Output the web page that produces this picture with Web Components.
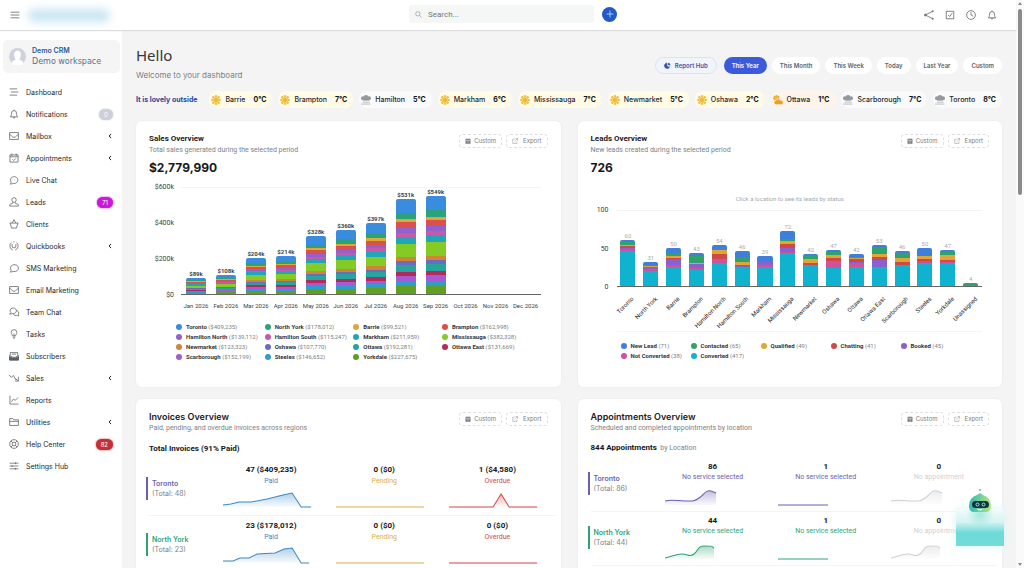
<!DOCTYPE html>
<html lang="en">
    <head>
        <meta charset="utf-8" />
        <meta name="viewport" content="width=device-width, initial-scale=1" />
        <title>Demo CRM - Dashboard</title>
        <style>
            body {
                margin: 0;
                font-family: Inter, 'Liberation Sans', sans-serif;
                font-size: 7px;
                color: #22262b;
                background: #f4f4f5;
            }
        </style>
    </head>
    <body>
        <crm-app>
            <crm-header slot="header"></crm-header>
            <crm-sidebar slot="sidebar"></crm-sidebar>
            <page-intro></page-intro>
            <weather-strip></weather-strip>
            <card-grid>
                <dash-card heading="Sales Overview" sub="Total sales generated during the selected period">
                    <sales-chart total="$2,779,990"></sales-chart>
                </dash-card>
                <dash-card heading="Leads Overview" sub="New leads created during the selected period">
                    <leads-chart total="726"></leads-chart>
                </dash-card>
                <dash-card class="wide" heading="Invoices Overview" sub="Paid, pending, and overdue invoices across regions">
                    <region-list kind="invoices"><b>Total Invoices (91% Paid)</b></region-list>
                </dash-card>
                <dash-card class="wide" heading="Appointments Overview" sub="Scheduled and completed appointments by location">
                    <region-list kind="appointments"><b>844 Appointments</b>&nbsp; by Location</region-list>
                </dash-card>
            </card-grid>
            <chat-bot slot="overlay"></chat-bot>
        </crm-app>

        <script>
            // Base class: attaches the shadow root and fills it from render()
            class CrmElement extends HTMLElement {
                connectedCallback() {
                    if (this.shadowRoot) return
                    this.attachShadow({ mode: 'open' }).innerHTML =
                        `<style>:host, * { box-sizing: border-box; } ${this.styles()}</style>` +
                        this.render()
                }

                styles() {
                    return ''
                }

                render() {
                    return '<slot></slot>'
                }
            }

            const ICONS = {
                menu: '<path d="M1 3.500h14M1 8h14M1 12.500h14"/>',
                list: '<path d="M1 3h12M3 8h12M1 13h12"/>',
                bell: '<path d="M8 1v1.500M2 12.500c1.500-1 2-2.500 2-6a4 4 0 0 1 8 0c0 3.500.5 5 2 6zM6.500 13a1.500 1.500 0 0 0 3 0"/>',
                mail: '<path d="M1 2.500h14v11H1zM1 5l5 4.500q2 1.500 4 0L15 5"/>',
                calendar: '<path d="M1.500 3h13v11.500h-13zM1.500 6h13M4.500 1v3.500M11.500 1v3.500M5.500 10l2 2 3.500-3.500"/>',
                chat: '<path d="M3.500 11.500A6 5.500 0 1 1 7 13.500q-2.500 1-5 1 1.500-1 1.500-3z"/><path d="M5 8h.5M8 8h.5M11 8h.5"/>',
                user: '<path d="M8 1a3.500 3.500 0 0 1 3.500 3.500C11.500 7 10 8.500 8 8.500S4.500 7 4.500 4.500A3.500 3.500 0 0 1 8 1zM6 8.500v1.500l-4 1.500q-1 .5-1 3h14q0-2.500-1-3L10 10V8.500"/>',
                basket: '<path d="M1 6.500h14M2 6.500l2 8h8l2-8M5 6.500L8 1l3 5.500"/>',
                books: '<path d="M6 14.500A7 7 0 0 1 4 2.500M10 14.500a7 7 0 0 0 2-12M5 5v3a3 3 0 0 0 6 0V5M7 1.500h2"/>',
                bubble: '<path d="M3.500 11.500A6.500 5.500 0 1 1 7 13.500q-2.500 1-5 1 1.500-1 1.500-3z"/>',
                bubbles: '<path d="M3 9A5 4.500 0 1 1 6 10.500q-2 1-5 .5Q3 10.500 3 9zM11.500 6A3.500 3.500 0 0 1 15 11.500q0 2 1 2.500-3 0-4-.5a5 4 0 0 1-5-1.500"/>',
                bulb: '<path d="M5.500 11c0-2-2-2.500-2-5.500a4.500 4.500 0 0 1 9 0c0 3-2 3.500-2 5.500zM6 13h4M7 15h2M8 11V7"/>',
                inbox: '<path d="M2 7V2.500h12V7M1 7v7.500h14V7l-5 3H6zM4.500 5h7"/><path fill="currentColor" d="M1 9l5 2h4l5-2v5.500H1z"/>',
                trend: '<path d="M0 3l3.500 4L7 4l4 7 1-1M15 6v7H9.500M11 9l4 4"/>',
                report: '<path d="M1.500 1v13.500H15M4 11l3-4.500 3 2L14.500 4"/>',
                folder: '<path d="M1 13.500v-11h5l1.500 2H15v9zM1 7h14"/>',
                help: '<circle cx="8" cy="8" r="7"/><circle cx="8" cy="8" r="3"/><path d="M3 3l3 3M13 3l-3 3M3 13l3-3M13 13l-3-3"/>',
                sliders: '<path d="M1 3.500h14M1 8h14M1 12.500h14M10.500 2v3M5 6.500v3M10.500 11v3"/>',
                share: '<path d="M14 2L2 8l12 6"/><circle cx="14" cy="2" r="1"/><circle cx="2" cy="8" r="1.500"/><circle cx="14" cy="14" r="1"/>',
                check: '<path d="M2 2h12v12H2zM5 8l2.500 2.500L11.500 5"/>',
                clock: '<circle cx="8" cy="8" r="7"/><path d="M8 3.500V8l3.500 2"/>',
                search: '<circle cx="6.500" cy="6.500" r="5"/><path d="M10.500 10.500L15 15"/>',
                plus: '<path d="M8 1v14M1 8h14"/>',
                left: '<path d="M11 2.500L5.500 8l5.500 5.500"/>',
                date: '<path fill="currentColor" d="M2 3h12v12H2z"/><path d="M5 1v3M11 1v3"/><path stroke="#fff" d="M2 6.500h12M5 10.500h6"/>',
                export: '<path d="M7 3H2v11.500h11V9M9.500 1.500H15V7M15 1.500L7 9.500"/>',
                pie: '<path fill="currentColor" d="M7 2a6.500 6.500 0 1 0 5 11L7 8.500z"/><path fill="currentColor" d="M9.500 1.500v6H15a6 6 0 0 0-5.500-6zM10 10l3 2.500a6 6 0 0 0 1.500-2.500z" stroke="none"/>',
                sun: '<g stroke="#ebb640"><path stroke-width="3.500" d="M8 .5v15M.5 8h15M2.500 2.500l11 11M13.500 2.500l-11 11"/><circle cx="8" cy="8" r="5" fill="#ffd966" stroke="#f7cb58"/><circle cx="8" cy="8" r="3" fill="#f0b93c"/></g>',
                rain: '<g stroke="none" fill="#96999c"><circle cx="3" cy="5" r="3"/><circle cx="8" cy="4" r="4"/><circle cx="13" cy="5" r="3"/><path d="M3 4h10v5H3z"/></g><path stroke="#a9abad" d="M0 14.500h15M3 11.500h11"/>',
                cloudy: '<g stroke="#e9a52f"><circle cx="5.500" cy="5.500" r="4" fill="#f3bd3f"/><path stroke-width="2" d="M5.500 0v2M0 5.500h2M1.500 1.500l1.500 1.500M9.500 1.500L8 3"/></g><path stroke="#fff4ea" fill="#e8a02c" d="M5 15.500a3.500 3.500 0 0 1 0-7 4 4 0 0 1 7 0 3.500 3.500 0 0 1 2 7z"/>'
            }

            customElements.define(
                'ui-icon',
                class extends CrmElement {
                    styles() {
                        return `
                            :host { display: inline-flex; flex: none; width: 10px; height: 10px; }
                            svg { width: 100%; height: 100%; overflow: visible; fill: none;
                                stroke: currentColor; stroke-width: 1.2; stroke-linejoin: round; }
                            :host(.bold) svg { stroke-width: 2.5; }`
                    }

                    render() {
                        return `<svg viewBox="0 0 16 16" aria-hidden="true">${ICONS[this.getAttribute('name')]}</svg>`
                    }
                }
            )

            // Page frame: header on top, sidebar and content below, scroll rail at the right
            customElements.define(
                'crm-app',
                class extends CrmElement {
                    styles() {
                        return `
                            :host { display: grid; grid-template-columns: minmax(0, 1fr) 8px;
                                height: 100vh; overflow: hidden; }
                            .frame { display: flex; flex-direction: column; min-height: 0; }
                            .body { display: flex; flex: 1; min-height: 0; }
                            main { flex: 1; min-width: 0; overflow: hidden; padding: 15px 14px 0;
                                display: flex; flex-direction: column; }
                            .rail { display: flex; flex-direction: column; align-items: center;
                                justify-content: space-between; padding: 2px 0; background: #fafafa; }
                            .thumb { flex: none; width: 4px; height: 33%; margin-bottom: auto;
                                margin-top: 4px; border-radius: 2px; background: #8b8b8b; }
                            .arrow { border: 2px solid transparent; border-bottom: 3px solid #8b8b8b;
                                border-top: 0; }
                            .arrow.down { transform: rotate(180deg); }`
                    }

                    render() {
                        return `
                            <div class="frame">
                                <slot name="header"></slot>
                                <div class="body">
                                    <slot name="sidebar"></slot>
                                    <main><slot></slot></main>
                                </div>
                            </div>
                            <div class="rail"><i class="arrow"></i><i class="thumb"></i><i class="arrow down"></i></div>
                            <slot name="overlay"></slot>`
                    }
                }
            )

            customElements.define(
                'crm-header',
                class extends CrmElement {
                    styles() {
                        return `
                            :host { position: relative; z-index: 1; flex: none; display: grid;
                                grid-template-columns: 1fr auto 1fr; align-items: center; height: 30px;
                                padding-left: 10px; background: #fff; color: #55595e;
                                box-shadow: 0 1px 1px #dcdcdc; }
                            button { padding: 0; border: 0; background: none; color: inherit; display: inline-flex; }
                            .start, .middle, .end { display: flex; align-items: center; }
                            .start { gap: 8px; }
                            .brand { width: 82px; height: 13px; background: #c9e6f2; filter: blur(4px);
                                border-radius: 6px; }
                            .middle { gap: 8px; padding-bottom: 2px; }
                            label { display: flex; align-items: center; gap: 6px; width: 185px; height: 18px;
                                padding: 0 6px; background: #f5f6f6; border-radius: 3px; color: #777; }
                            label ui-icon { width: 7px; height: 7px; }
                            input { flex: 1; min-width: 0; border: 0; padding: 0; background: none;
                                font: 8px Roboto, sans-serif; outline: 0; }
                            input::placeholder { color: #777; }
                            .add { width: 15px; height: 15px; border-radius: 50%; background: #2159c9;
                                color: #fff; align-items: center; justify-content: center; }
                            .add ui-icon { width: 8px; height: 8px; }
                            .end { justify-content: flex-end; gap: 11px; padding-right: 19px; }
                            .end ui-icon { width: 10px; }`
                    }

                    render() {
                        return `
                            <div class="start">
                                <button aria-label="Menu"><ui-icon name="menu"></ui-icon></button>
                                <span class="brand"></span>
                            </div>
                            <div class="middle">
                                <label><ui-icon name="search"></ui-icon>
                                    <input type="search" placeholder="Search..." aria-label="Search" /></label>
                                <button class="add" aria-label="Add"><ui-icon name="plus"></ui-icon></button>
                            </div>
                            <div class="end">
                                <button aria-label="Share"><ui-icon name="share"></ui-icon></button>
                                <button aria-label="To do"><ui-icon name="check"></ui-icon></button>
                                <button aria-label="Timers"><ui-icon name="clock"></ui-icon></button>
                                <button aria-label="Notifications"><ui-icon name="bell"></ui-icon></button>
                            </div>`
                    }
                }
            )

            // icon, label, trailing part ('<' = submenu, otherwise badge text), badge colour
            const NAV = [
                ['list', 'Dashboard'],
                ['bell', 'Notifications', '0', '#ccd0d9'],
                ['mail', 'Mailbox', '<'],
                ['calendar', 'Appointments', '<'],
                ['chat', 'Live Chat'],
                ['user', 'Leads', '71', '#c81bd6'],
                ['basket', 'Clients'],
                ['books', 'Quickbooks', '<'],
                ['bubble', 'SMS Marketing'],
                ['mail', 'Email Marketing'],
                ['bubbles', 'Team Chat'],
                ['bulb', 'Tasks'],
                ['inbox', 'Subscribers'],
                ['trend', 'Sales', '<'],
                ['report', 'Reports'],
                ['folder', 'Utilities', '<'],
                ['help', 'Help Center', '82', '#c62f35'],
                ['sliders', 'Settings Hub']
            ]

            customElements.define(
                'crm-sidebar',
                class extends CrmElement {
                    styles() {
                        return `
                            :host { flex: none; width: 122px; padding: 10px 2px 0 3px; background: #fff; }
                            .profile { display: flex; align-items: center; gap: 6px; height: 33px;
                                padding: 0 6px; border-radius: 5px; background: #f5f5f6; color: #54708f;
                                font: 8px/11px 'DejaVu Sans', sans-serif; white-space: nowrap; }
                            .profile b { display: block; font: 600 7px/10px Inter, sans-serif; color: #2c5a98; }
                            .profile svg { flex: none; width: 17px; height: 17px; }
                            nav { padding-top: 8px; }
                            a { display: flex; align-items: center; gap: 7px; height: 22px;
                                padding: 0 7px 0 6px; color: #25282c; text-decoration: none; }
                            a ui-icon { color: #5b5f64; }
                            a span { flex: 1; }
                            a ui-icon.bold { width: 6px; height: 6px; color: #111; }
                            a i { min-width: 14px; padding: 0 5px; border-radius: 6px; color: #fff;
                                font: 6px/11px Inter, sans-serif; text-align: center;
                                background: var(--badge); box-shadow: 0 0 2px var(--badge); }`
                    }

                    render() {
                        const tail = (end, color) => {
                            if (!end) return ''
                            if (end === '<') return '<ui-icon class="bold" name="left"></ui-icon>'
                            return `<i style="--badge: ${color}">${end}</i>`
                        }
                        return `
                            <div class="profile">
                                <svg viewBox="0 0 16 16"><circle cx="8" cy="8" r="8" fill="#cfd2de"/>
                                    <path fill="#fff" d="M8 2.500c3 0 3.500 2.500 3 5-.2 1.500-1 2.500-1.200 3.500l3.200 1.500v3.500H3v-3.500L6.200 11C6 10 5.200 9 5 7.500c-.5-2.500 0-5 3-5z"/></svg>
                                <div><b>Demo CRM</b>Demo workspace</div>
                            </div>
                            <nav>${NAV.map(
                                ([icon, text, end, color]) =>
                                    `<a href="#"><ui-icon name="${icon}"></ui-icon><span>${text}</span>${tail(end, color)}</a>`
                            ).join('')}</nav>`
                    }
                }
            )

            customElements.define(
                'page-intro',
                class extends CrmElement {
                    styles() {
                        return `
                            :host { display: flex; align-items: center; justify-content: space-between; }
                            h1 { margin: 0 0 4px; font: 15px/20px 'Noto Sans', sans-serif; color: #33373d; }
                            p { margin: 0; font-size: 8px; line-height: 12px; color: #7d8188; }
                            .filters { display: flex; gap: 5px; margin-top: 4px; }
                            button { height: 17px; padding: 0 8px; border: 0; border-radius: 9px; background: #fff;
                                color: #5d6167; font: 600 6px/17px Inter, sans-serif; display: flex;
                                align-items: center; gap: 4px; }
                            .hub { margin-right: 2px; border: 1px solid #dbe3f1; background: #f0f4fb; color: #3c55a8; }
                            .hub ui-icon { width: 7px; height: 7px; }
                            .on { background: #3b5bdb; color: #fff; }`
                    }

                    render() {
                        const ranges = ['This Year', 'This Month', 'This Week', 'Today', 'Last Year', 'Custom']
                        return `
                            <div><h1>Hello</h1><p>Welcome to your dashboard</p></div>
                            <div class="filters">
                                <button class="hub"><ui-icon name="pie"></ui-icon>Report Hub</button>
                                ${ranges.map((r, i) => `<button class="${i ? '' : 'on'}">${r}</button>`).join('')}
                            </div>`
                    }
                }
            )

            const WEATHER = [
                ['sun', 'Barrie', 0],
                ['sun', 'Brampton', 7],
                ['rain', 'Hamilton', 5],
                ['sun', 'Markham', 6],
                ['sun', 'Mississauga', 7],
                ['sun', 'Newmarket', 5],
                ['sun', 'Oshawa', 2],
                ['cloudy', 'Ottawa', 1],
                ['rain', 'Scarborough', 7],
                ['rain', 'Toronto', 8]
            ]

            customElements.define(
                'weather-strip',
                class extends CrmElement {
                    styles() {
                        return `
                            :host { display: flex; align-items: center; justify-content: space-between;
                                margin: 10px 0 13px; white-space: nowrap; }
                            strong { margin-right: 6px; font-weight: 700; color: #27489b; }
                            div { display: flex; align-items: center; gap: 4px; height: 17px; padding: 0 6px 0 2px;
                                border-radius: 8px; font-weight: 500; }
                            .sun { background: #fffbe6; }
                            .rain { background: #f9fafc; }
                            .cloudy { background: #fff4ea; }
                            b { margin-left: 4px; font-weight: 700; color: #111; }`
                    }

                    render() {
                        return (
                            '<strong>It is lovely outside</strong>' +
                            WEATHER.map(
                                ([icon, city, t]) =>
                                    `<div class="${icon}"><ui-icon name="${icon}"></ui-icon>${city}<b>${t}°C</b></div>`
                            ).join('')
                        )
                    }
                }
            )

            customElements.define(
                'card-grid',
                class extends CrmElement {
                    styles() {
                        return `:host { display: grid; grid-template-columns: repeat(2, minmax(0, 1fr)); gap: 12px 17px; }`
                    }
                }
            )

            customElements.define(
                'dash-card',
                class extends CrmElement {
                    styles() {
                        return `
                            :host { display: block; padding: 13px 13px 25px; border-radius: 6px; background: #fff;
                                box-shadow: 0 0 3px rgba(0, 0, 0, 0.05); font-family: Roboto, sans-serif; }
                            header { display: flex; justify-content: space-between; align-items: flex-start; }
                            h2 { margin: 0 0 1px; font-size: 8px; line-height: 10px; font-weight: 700; color: #1c2026; }
                            p { margin: 0; font-size: 7px; line-height: 10px; color: #7d8188; }
                            :host(.wide) h2 { font: 600 9px/10px Inter, sans-serif; }
                            .tools { display: flex; gap: 4px; }
                            button { display: flex; align-items: center; gap: 3px; height: 14px; padding: 0 5px;
                                border: 1px dashed #dddfe2; border-radius: 4px; background: #fff; color: #7a7e84;
                                font: 6px/10px Inter, sans-serif; }
                            .export { gap: 5px; }
                            button ui-icon { width: 6px; height: 6px; }`
                    }

                    render() {
                        return `
                            <header>
                                <div><h2>${this.getAttribute('heading')}</h2><p>${this.getAttribute('sub')}</p></div>
                                <div class="tools">
                                    <button><ui-icon name="date"></ui-icon>Custom</button>
                                    <button class="export"><ui-icon name="export"></ui-icon>Export</button>
                                </div>
                            </header>
                            <slot></slot>`
                    }
                }
            )

            const CHART_STYLES = `
                :host { display: block; color: #3b3f45; }
                .total { margin: 6px 0 12px; font: 700 12px/14px Inter, sans-serif; color: #15181c; }
                .chart { display: grid; grid-template-columns: 25px 1fr; column-gap: 7px; padding-right: 7px; }
                .axis { display: flex; flex-direction: column; justify-content: space-between;
                    margin: -5px 0; text-align: right; font-size: 7px; line-height: 10px; }
                .plot { display: grid; grid-auto-flow: column; grid-auto-columns: minmax(0, 1fr);
                    align-items: end; border-top: 1px solid #f2f3f4; border-bottom: 1px solid #666; }
                .col { display: flex; flex-direction: column; align-items: center; }
                .bar { width: 66%; border-radius: 2px 2px 0 0; }
                .value { font-size: 6px; line-height: 8px; }
                .ticks { grid-column: 2; display: grid; grid-auto-flow: column;
                    grid-auto-columns: minmax(0, 1fr); text-align: center; white-space: nowrap; }
                .legend { display: grid; font-size: 6px; line-height: 10px; color: #7b7f85; white-space: nowrap; }
                .legend span::before { content: ''; display: inline-block; width: 6px; height: 6px;
                    margin-right: 4px; border-radius: 50%; background: var(--dot); vertical-align: -1px; }
                .legend b { color: #33373c; }`

            // Stacked bar as one hard-stop gradient, from the bottom up
            const stack = parts => {
                const sum = parts.reduce((n, [, v]) => n + v, 0)
                let at = 0
                const stops = parts
                    .filter(([, v]) => v)
                    .map(([color, v]) => {
                        const from = at
                        at += (v / sum) * 100
                        return `${color} ${from}% ${at}%`
                    })
                return `linear-gradient(to top, ${stops.join(', ')})`
            }

            const legend = rows =>
                rows
                    .map(([name, value, color]) => `<span style="--dot: ${color}"><b>${name}</b> (${value})</span>`)
                    .join('')

            const LOCATIONS = [
                ['Toronto', '$409,235', '#3a8dde'],
                ['North York', '$178,012', '#2ba37a'],
                ['Barrie', '$99,521', '#dfa63c'],
                ['Brampton', '$162,998', '#d9504c'],
                ['Hamilton North', '$139,112', '#9361cc'],
                ['Hamilton South', '$115,247', '#c75aa8'],
                ['Markham', '$211,959', '#21a5b8'],
                ['Mississauga', '$382,328', '#84cc25'],
                ['Newmarket', '$123,323', '#d08434'],
                ['Oshawa', '$107,770', '#6a6cc0'],
                ['Ottawa', '$192,281', '#26a59c'],
                ['Ottawa East', '$131,669', '#b32a5e'],
                ['Scarborough', '$152,199', '#a75bd0'],
                ['Steeles', '$146,652', '#2e9dcb'],
                ['Yorkdale', '$227,675', '#609f22']
            ]
            const MONTHS = {
                Jan: 89, Feb: 108, Mar: 204, Apr: 214, May: 328, Jun: 360,
                Jul: 397, Aug: 531, Sep: 549, Oct: 0, Nov: 0, Dec: 0
            }

            customElements.define(
                'sales-chart',
                class extends CrmElement {
                    styles() {
                        return (
                            CHART_STYLES +
                            `.plot { height: 108px; }
                            .axis { height: 118px; }
                            .value { font-weight: 700; }
                            .ticks { font-size: 6px; line-height: 10px; padding-top: 6px; }
                            .legend { grid-template-columns: repeat(4, 1fr); margin: 11px 17px 0 27px; }`
                        )
                    }

                    render() {
                        const fill = stack(
                            LOCATIONS.map(([, v, c]) => [c, Number(v.replace(/\D/g, ''))]).reverse()
                        )
                        const months = Object.entries(MONTHS)
                        return `
                            <div class="total">${this.getAttribute('total')}</div>
                            <div class="chart">
                                <div class="axis"><span>$600k</span><span>$400k</span><span>$200k</span><span>$0</span></div>
                                <div class="plot">${months
                                    .map(([, v]) =>
                                        v
                                            ? `<div class="col"><span class="value">$${v}k</span>
                                                <div class="bar" style="height: ${Math.round((v / 600) * 107)}px; background: ${fill}"></div></div>`
                                            : '<div></div>'
                                    )
                                    .join('')}</div>
                                <div class="ticks">${months.map(([m]) => `<span>${m} 2026</span>`).join('')}</div>
                            </div>
                            <div class="legend">${legend(LOCATIONS)}</div>`
                    }
                }
            )

            const STATUSES = [
                ['New Lead', 71, '#3f7fdc'],
                ['Contacted', 65, '#2fa36b'],
                ['Qualified', 49, '#e0a534'],
                ['Chatting', 41, '#cf4a45'],
                ['Booked', 45, '#8a5fd0'],
                ['Not Converted', 38, '#d0529c'],
                ['Converted', 417, '#0fb3d0']
            ]
            // label, total, then one count for each status in the order above
            const LEADS = [
                ['Toronto', 60, 1, 6, 1, 2, 2, 2, 46],
                ['North York', 31, 4, 1, 1, 0, 3, 3, 19],
                ['Barrie', 50, 6, 4, 3, 2, 7, 3, 25],
                ['Brampton', 43, 4, 9, 1, 0, 6, 2, 21],
                ['Hamilton North', 54, 5, 2, 5, 6, 1, 5, 30],
                ['Hamilton South', 46, 8, 7, 3, 2, 1, 0, 25],
                ['Markham', 39, 6, 0, 1, 0, 5, 2, 25],
                ['Mississauga', 72, 10, 3, 4, 5, 6, 1, 43],
                ['Newmarket', 42, 1, 5, 6, 2, 1, 0, 27],
                ['Oshawa', 47, 2, 4, 4, 4, 1, 9, 23],
                ['Ottawa', 42, 4, 1, 2, 3, 2, 5, 25],
                ['Ottawa East', 53, 3, 9, 4, 4, 8, 1, 24],
                ['Scarborough', 46, 3, 6, 5, 4, 1, 0, 27],
                ['Steeles', 50, 10, 1, 3, 3, 1, 2, 30],
                ['Yorkdale', 47, 2, 5, 6, 3, 0, 1, 30],
                ['Unassigned', 4, 0, 4, 0, 0, 0, 0, 0]
            ]

            customElements.define(
                'leads-chart',
                class extends CrmElement {
                    styles() {
                        return (
                            CHART_STYLES +
                            `.total { margin-bottom: 0; }
                            .hint { padding: 19px 0 6px; text-align: center; font-size: 6px; line-height: 10px; color: #a6a9ad; }
                            .chart { grid-template-columns: 18px 1fr; column-gap: 8px; }
                            .plot { height: 77px; }
                            .axis { height: 87px; }
                            .value { color: #a9acb0; line-height: 9px; }
                            .ticks { height: 45px; font-size: 6px; line-height: 7px; border-bottom: 1px solid #f4f5f5; }
                            .ticks div { position: relative; }
                            .ticks span { position: absolute; top: 8px; right: 40%; transform: rotate(-45deg);
                                transform-origin: top right; color: #222; }
                            .legend { grid-template-columns: repeat(5, 70px); margin: 9px 0 0 30px; }`
                        )
                    }

                    render() {
                        return `
                            <div class="total">${this.getAttribute('total')}</div>
                            <div class="hint">Click a location to see its leads by status</div>
                            <div class="chart">
                                <div class="axis"><span>100</span><span>50</span><span>0</span></div>
                                <div class="plot">${LEADS.map(
                                    ([, sum, ...counts]) => `<div class="col"><span class="value">${sum}</span>
                                        <div class="bar" style="height: ${Math.round(sum * 0.765)}px; background: ${stack(
                                            counts.map((n, i) => [STATUSES[i][2], n]).reverse()
                                        )}"></div></div>`
                                ).join('')}</div>
                                <div class="ticks">${LEADS.map(([name]) => `<div><span>${name}</span></div>`).join('')}</div>
                            </div>
                            <div class="legend">${legend(STATUSES)}</div>`
                    }
                }
            )

            // Small line with a faded area below it, in an 88 x 17 box
            customElements.define(
                'spark-line',
                class extends CrmElement {
                    styles() {
                        return `
                            :host { display: block; height: 17px; }
                            svg { display: block; width: 100%; height: 100%; overflow: visible; }
                            .line { fill: none; stroke: currentColor; vector-effect: non-scaling-stroke; }`
                    }

                    render() {
                        const path = this.getAttribute('path')
                        return `
                            <svg viewBox="0 0 88 17" preserveAspectRatio="none" aria-hidden="true">
                                <linearGradient id="fade" x2="0" y2="1">
                                    <stop stop-color="currentColor" stop-opacity="0.4"/>
                                    <stop offset="1" stop-color="currentColor" stop-opacity="0.03"/>
                                </linearGradient>
                                <path fill="url(#fade)" d="${path}V15H0z"/>
                                <path class="line" d="${path}"/>
                            </svg>`
                    }
                }
            )

            const FLAT = 'M0 15H88'
            const SHORT = 'M0 15H50'
            const CURVE = 'M0 11C8 9 12 11 20 11S28 12 34 8 40 0 46 1L51 3'
            const CURVE2 = 'M0 14C6 13 11 10 17 10S24 14 29 10 32 2 40 2 46 2 49 4'
            const REGIONS = {
                invoices: [
                    ['Toronto', 48, '#6a5fb0', [
                        ['47 ($409,235)', 'Paid', '#3a8ac4', 'M0 13L8 12 16 10 28 10 44 7 60 3 69 1 78 15H88'],
                        ['0 ($0)', 'Pending', '#d9b13c', FLAT],
                        ['1 ($4,580)', 'Overdue', '#d04848', 'M0 15H44L52 2 60 15H88']
                    ]],
                    ['North York', 23, '#2fa376', [
                        ['23 ($178,012)', 'Paid', '#3a8ac4', 'M0 13H10L17 10H26L34 6 52 5 61 1 69 0 78 15H86'],
                        ['0 ($0)', 'Pending', '#d9b13c', FLAT],
                        ['0 ($0)', 'Overdue', '#d04848', FLAT]
                    ]]
                ],
                appointments: [
                    ['Toronto', 86, '#6a5fb0', [
                        ['86', 'No service selected', '#6a5fb0', CURVE],
                        ['1', 'No service selected', '#6a5fb0', SHORT],
                        ['0', 'No appointment', '#cfd1d3', CURVE]
                    ]],
                    ['North York', 44, '#2fa376', [
                        ['44', 'No service selected', '#2fa376', CURVE2],
                        ['1', 'No service selected', '#2fa376', SHORT],
                        ['0', 'No appointment', '#cfd1d3', CURVE2]
                    ]]
                ]
            }

            customElements.define(
                'region-list',
                class extends CrmElement {
                    styles() {
                        return `
                            :host { display: block; margin-right: -7px; font-size: 7px; color: #7d8188; }
                            h3 { margin: 11px 0 6px; font-weight: 400; font-size: 7px; line-height: 10px; }
                            ::slotted(b) { font-size: 8px; font-weight: 700; color: #15181c; }
                            .row { display: grid; grid-template-columns: 66px repeat(3, minmax(0, 1fr));
                                height: 56px; padding-top: 5px; border-bottom: 1px solid #f3f4f5; }
                            .name { margin: 12px 0 0 -3px; padding: 2px 0 0 4px; height: 23px; align-self: start;
                                border-left: 2px solid var(--tone); font: 7px/10px Inter, sans-serif; }
                            .name b { display: block; font-weight: 600; color: var(--tone); }
                            .cell { padding: 0 17px 0 8px; text-align: center; }
                            .cell > b, .cell > span { display: block; margin-right: -8px; line-height: 10px; white-space: nowrap; }
                            .cell > b { margin-bottom: 1px; font-size: 8px; font-weight: 700; color: #15181c; }
                            .cell > span { color: var(--tone); }
                            spark-line { margin-top: 6px; color: var(--tone); }
                            :host([kind='appointments']) h3 { margin: 10px 0 5px; }
                            :host([kind='appointments']) .row { height: 54px; padding-top: 4px; }
                            :host([kind='appointments']) .name { margin-top: 10px; }
                            :host([kind='appointments']) .cell > b { margin-bottom: 0; }
                            :host([kind='appointments']) spark-line { margin-top: 8px; }`
                    }

                    render() {
                        return (
                            '<h3><slot></slot></h3>' +
                            REGIONS[this.getAttribute('kind')]
                                .map(
                                    ([name, total, tone, cells]) => `
                                    <div class="row">
                                        <div class="name" style="--tone: ${tone}"><b>${name}</b>(Total: ${total})</div>
                                        ${cells
                                            .map(
                                                ([count, label, color, path]) => `
                                                <div class="cell" style="--tone: ${color}"><b>${count}</b><span>${label}</span>
                                                    <spark-line path="${path}"></spark-line></div>`
                                            )
                                            .join('')}
                                    </div>`
                                )
                                .join('')
                        )
                    }
                }
            )

            customElements.define(
                'chat-bot',
                class extends CrmElement {
                    styles() {
                        return `
                            :host { position: fixed; right: 20px; bottom: 22px; width: 48px; z-index: 2; }
                            button { display: block; width: 100%; padding: 0; border: 0; background: none; }
                            svg { display: block; width: 24px; margin: 0 auto; }
                            .body { display: block; height: 37px; margin-top: -4px;
                                background:
                                    radial-gradient(circle at 50% 15%, #a5e8de, transparent 35%),
                                    linear-gradient(#f2fbfacc, #d5f3f1 35%, #6bdad8 65%, #74dcda);
                                box-shadow: 0 0 10px #d8f4f2; }`
                    }

                    render() {
                        return `
                            <button aria-label="Open assistant">
                                <svg viewBox="0 0 24 24" aria-hidden="true">
                                    <linearGradient id="skin"><stop stop-color="#2db9b4"/><stop offset="1" stop-color="#b5e67e"/></linearGradient>
                                    <circle cx="12" cy="1" r="1" fill="#7fa8a5"/>
                                    <path fill="url(#skin)" d="M12 4l3 2a11 11 0 0 1 8 11q0 5-4 6H5q-4-1-4-6A11 11 0 0 1 9 6z"/>
                                    <rect x="4" y="12" width="17" height="7" rx="3.500" fill="#11353d"/>
                                    <g fill="none" stroke="#8fe6e6"><circle cx="9.500" cy="15.500" r="1.500"/><circle cx="15.500" cy="15.500" r="1.500"/></g>
                                    <path fill="#fff" d="M9 20h6q-3 3-6 0z"/>
                                </svg>
                                <span class="body"></span>
                            </button>`
                    }
                }
            )
        </script>
    </body>
</html>
